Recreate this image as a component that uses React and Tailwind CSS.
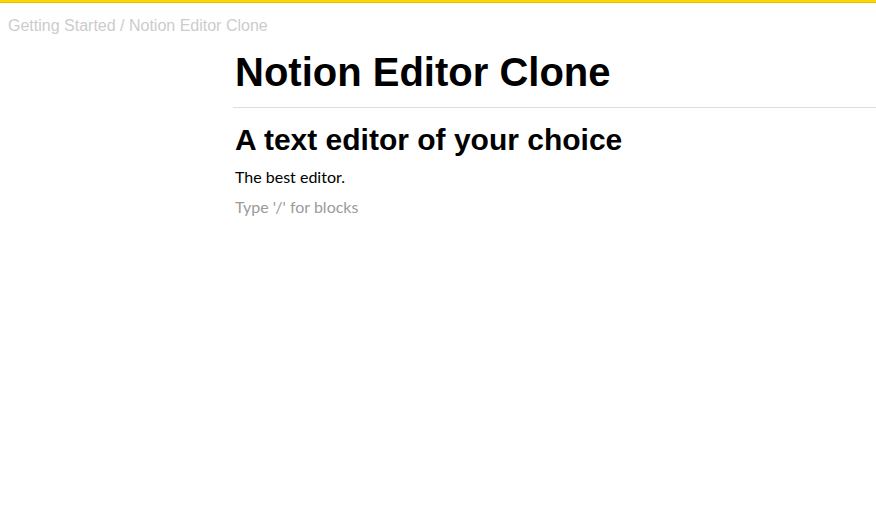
import React from 'react';

const blocks = [
  { type: 'h2', text: 'A text editor of your choice' },
  { type: 'p', text: 'The best editor.' },
];

const Block = ({ block }) => {
  if (block.type === 'h2') {
    return (
      <h2 className="px-[2px] font-['Liberation_Sans',Arial,sans-serif] text-[30px] leading-[36px] font-bold text-black">
        {block.text}
      </h2>
    );
  }
  return (
    <p className="px-[2px] font-['Lato',sans-serif] text-[16px] leading-[24px] text-black">
      {block.text}
    </p>
  );
};

export default function App() {
  return (
    <div className="min-h-[528px] w-full bg-white">
      {/* top accent bar */}
      <div className="h-[2px] bg-[#ffd700] border-b border-[#e0c200] box-content" />

      <div className="pt-[13px] px-2 font-['Liberation_Sans',Arial,sans-serif] text-[16px] leading-[20px] text-[#cccccc]">
        Getting Started / Notion Editor Clone
      </div>

      <div className="flex">
        <div className="w-[233px] shrink-0" />
        <div className="flex-1">
          <div className="mt-[12px] pb-[11px] border-b border-[#dddddd]">
            <h1 className="px-[2px] font-['Liberation_Sans',Arial,sans-serif] text-[40px] leading-[48px] font-bold text-black">
              Notion Editor Clone
            </h1>
          </div>

          <div className="mt-[14px] flex flex-col gap-[7px]">
            {blocks.map((b, i) => (
              <Block key={i} block={b} />
            ))}
            <p className="-mt-px px-[2px] font-['Lato',sans-serif] text-[16px] leading-[24px] text-[#9b9b9b]">
              Type '/' for blocks
            </p>
          </div>
        </div>
      </div>
    </div>
  );
}
